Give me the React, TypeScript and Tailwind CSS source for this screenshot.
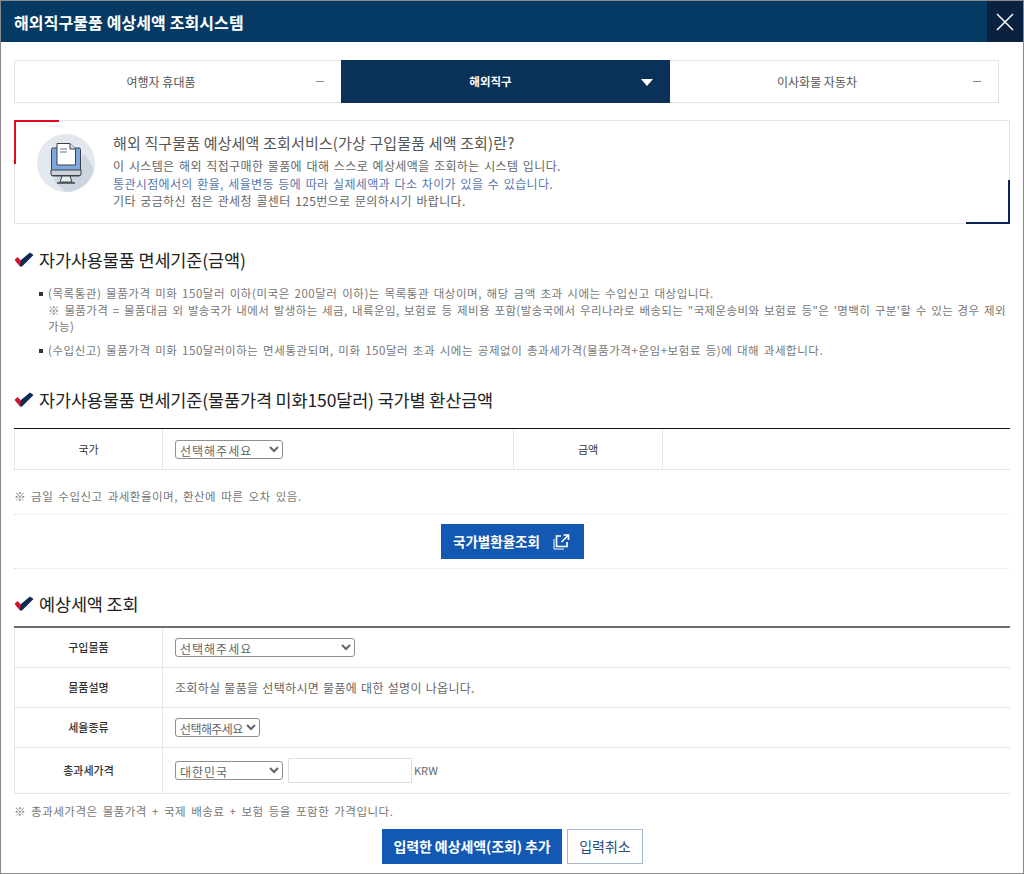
import { useState } from 'react';

const font = { fontFamily: '"Noto Sans CJK KR", "Noto Sans", sans-serif' };

function Title({ children, className }: { children: string; className: string }) {
  return (
    <h2 className={`flex items-center text-[#222] text-[17.5px] leading-[24px] tracking-[-0.15px] ${className}`}>
      <svg width="20" height="16" viewBox="0 0 20 16" className="mr-[5px] shrink-0">
        <path d="M0.5 8 L3.5 5 L7 8.5 L7 14 L6 14.5 Z" fill="#d3132f" />
        <path d="M6 14.500 L7 8 L16 0.500 L19.500 3 L8 14.500 Z" fill="#0c2a55" />
      </svg>
      {children}
    </h2>
  );
}

function Tab({ label, active, className = '' }: { label: string; active?: boolean; className?: string }) {
  if (active) {
    return (
      <div className="relative -my-px flex w-[329px] items-center justify-center bg-[#0a3158] pr-[30px] text-[11.500px] font-bold text-white">
        {label}
        <span className="absolute right-[17px] top-[19px] h-0 w-0 border-x-[6px] border-t-[7px] border-x-transparent border-t-white" />
      </div>
    );
  }
  return (
    <div className={`relative flex items-center justify-center pr-[34px] text-[12px] text-[#555] ${className}`}>
      {label}
      <span className="absolute right-[17px] top-[20px] h-px w-[8px] bg-[#888]" />
    </div>
  );
}

function Row({ label, h, children }: { label: string; h: string; children: React.ReactNode }) {
  return (
    <div className={`flex border-b border-[#e3e3e3] ${h}`}>
      <div className="flex w-[149px] shrink-0 items-center justify-center border-x border-[#e8e8e8] text-[11px] font-medium text-[#333]">
        {label}
      </div>
      <div className="flex flex-1 items-center gap-[5px] pl-[12px] text-[12px] text-[#666]">{children}</div>
    </div>
  );
}

function Sel({ className, options }: { className: string; options: string[] }) {
  return (
    <select className={`h-[19px] rounded-[3px] border border-[#8f8f8f] bg-white pl-0 text-[12px] leading-[15px] text-[#666] ${className}`} style={font}>
      {options.map((o) => (
        <option key={o}>{o}</option>
      ))}
    </select>
  );
}

export default function App() {
  const [amount, setAmount] = useState('');
  const pick = ['선택해주세요'];

  return (
    <div className="h-[874px] w-[1024px] overflow-hidden border-x border-y border-[#8a8a8a] bg-white" style={font}>
      {/* header */}
      <div className="flex h-[41px] items-center justify-between bg-[#043a63] pl-[13px]">
        <h1 className="text-[16px] font-bold tracking-[0.1px] text-white">해외직구물품 예상세액 조회시스템</h1>
        <button className="flex h-[41px] w-[36px] items-center justify-center bg-[#0a2240]">
          <svg width="20" height="20" viewBox="0 0 20 20" stroke="white" strokeWidth="1.500">
            <path d="M2 2 L18 18 M18 2 L2 18" />
          </svg>
        </button>
      </div>

      <div className="px-[13px]">
        {/* tabs */}
        <div className="mr-[11px] mt-[18px] flex h-[43px] border border-[#e3e3e3]">
          <Tab label="여행자 휴대품" className="w-[326px]" />
          <Tab label="해외직구" active />
          <Tab label="이사화물 자동차" className="flex-1" />
        </div>

        {/* info box */}
        <div className="relative mt-[17px] flex h-[104px] border border-[#dfe4ea]">
          <span className="absolute -left-px -top-px h-[2px] w-[45px] bg-[#e2071c]" />
          <span className="absolute -left-px -top-px h-[44px] w-[2px] bg-[#e2071c]" />
          <span className="absolute -bottom-px -right-px h-[2px] w-[44px] bg-[#0a2456]" />
          <span className="absolute -bottom-px -right-px h-[44px] w-[2px] bg-[#0a2456]" />
          <svg width="58" height="58" viewBox="0 0 58 58" className="ml-[22px] mt-[13px] shrink-0">
            <defs>
              <clipPath id="disc">
                <circle cx="29" cy="29" r="29" />
              </clipPath>
            </defs>
            <circle cx="29" cy="29" r="29" fill="#e3e8ee" />
            <path d="M48 20 L60 40 L60 60 L30 60 L16 46 Z" fill="#cdd6e0" clipPath="url(#disc)" />
            <rect x="14.500" y="14" width="29" height="28" rx="1.500" fill="#7fa6de" stroke="#39404a" strokeWidth="1" />
            <path d="M14 36 H44 V40 a1.500 1.500 0 0 1 -1.500 1.500 H15.500 a1.500 1.500 0 0 1 -1.500 -1.500 Z" fill="#cfd4da" stroke="#39404a" strokeWidth="1" />
            <path d="M25 42 L23 48 H35 L33 42 Z" fill="#e8ebee" stroke="#39404a" strokeWidth="1" />
            <path d="M20 49 H38" stroke="#39404a" strokeWidth="1.500" />
            <path d="M20 9.500 H33 L38.500 15 V31 H20 Z" fill="white" stroke="#39404a" strokeWidth="1" />
            <path d="M33 9.500 V15 H38.500" fill="#dde3ea" stroke="#39404a" strokeWidth="1" />
            <path d="M23 15 H30 M23 18 H30" stroke="#6b7480" strokeWidth="1" />
          </svg>
          <div className="ml-[18px] mt-[11px] text-[12px] leading-[17.500px] tracking-[0.35px] text-[#666] [word-spacing:1.500px]">
            <p className="mb-[3px] text-[15px] leading-[22px] tracking-[0.15px] text-[#555] [word-spacing:0px]">해외 직구물품 예상세액 조회서비스(가상 구입물품 세액 조회)란?</p>
            <p>이 시스템은 해외 직접구매한 물품에 대해 스스로 예상세액을 조회하는 시스템 입니다.</p>
            <p className="text-[#5a76ad]">통관시점에서의 환율, 세율변동 등에 따라 실제세액과 다소 차이가 있을 수 있습니다.</p>
            <p>기타 궁금하신 점은 관세청 콜센터 125번으로 문의하시기 바랍니다.</p>
          </div>
        </div>

        <Title className="mt-[24px]">자가사용물품 면세기준(금액)</Title>

        <ul className="mt-[13px] pl-[34px] text-[11.500px] leading-[16.500px] tracking-[0.55px] text-[#777] [word-spacing:1.500px]">
          <li className="relative">
            <span className="absolute -left-[9px] top-[7px] h-[4px] w-[4px] bg-[#333]" />
            (목록통관) 물품가격 미화 150달러 이하(미국은 200달러 이하)는 목록통관 대상이며, 해당 금액 초과 시에는 수입신고 대상입니다.
            <br />
            <span className="tracking-[0.4px]">
              ※ 물품가격 = 물품대금 외 발송국가 내에서 발생하는 세금, 내륙운임, 보험료 등 제비용 포함(발송국에서 우리나라로 배송되는 "국제운송비와 보험료 등"은 '명백히 구분'할 수 있는 경우 <span className="whitespace-nowrap">제외</span> 가능)
            </span>
          </li>
          <li className="relative mt-[7px]">
            <span className="absolute -left-[9px] top-[7px] h-[4px] w-[4px] bg-[#333]" />
            (수입신고) 물품가격 미화 150달러이하는 면세통관되며, 미화 150달러 초과 시에는 공제없이 총과세가격(물품가격+운임+보험료 등)에 대해 과세합니다.
          </li>
        </ul>

        <Title className="mt-[30px]">자가사용물품 면세기준(물품가격 미화150달러) 국가별 환산금액</Title>

        {/* exchange table */}
        <div className="mt-[16px] border-t border-[#111]">
          <div className="flex h-[41px] border-b border-[#e3e3e3]">
            <div className="flex w-[149px] items-center justify-center border-x border-[#e8e8e8] text-[11px] text-[#333]">국가</div>
            <div className="flex w-[350px] items-center pl-[12px]">
              <Sel className="w-[108px] tracking-[1px]" options={pick} />
            </div>
            <div className="flex w-[150px] items-center justify-center border-x border-[#e8e8e8] text-[11px] text-[#333]">금액</div>
          </div>
        </div>

        <p className="mt-[18px] text-[11.500px] leading-[16px] tracking-[0.5px] text-[#777] [word-spacing:2px]">※ 금일 수입신고 과세환율이며, 환산에 따른 오차 있음.</p>

        <div className="mt-[10px] flex h-[55px] items-center justify-center border-y border-dotted border-[#e2e2e2]">
          <button className="flex h-[35px] w-[143px] items-center justify-center gap-[13px] bg-[#1359b3] text-[13.500px] font-bold text-white">
            국가별환율조회
            <svg width="18" height="18" viewBox="0 0 18 18" fill="none" stroke="white" strokeWidth="1.700">
              <path d="M8 3 H3.500 V13.500 H14 V9" />
              <path d="M10.500 2 H15.500 V7 M15.500 2 L8.500 9" />
              <path d="M1 6 V16 H11" strokeWidth="1" />
            </svg>
          </button>
        </div>

        <Title className="mt-[23px]">예상세액 조회</Title>

        {/* estimate table */}
        <div className="mt-[10px] border-t-2 border-[#6e6e6e]">
          <Row label="구입물품" h="h-[40px]">
            <Sel className="w-[180px] tracking-[1px]" options={pick} />
          </Row>
          <Row label="물품설명" h="h-[40px]">
            <span className="tracking-[0.3px] [word-spacing:1px]">조회하실 물품을 선택하시면 물품에 대한 설명이 나옵니다.</span>
          </Row>
          <Row label="세율종류" h="h-[40px]">
            <Sel className="w-[85px] tracking-[-0.6px]" options={pick} />
          </Row>
          <Row label="총과세가격" h="h-[46px]">
            <Sel className="w-[108px] tracking-[1px]" options={['대한민국']} />
            <input
              value={amount}
              onChange={(e) => setAmount(e.target.value)}
              className="h-[25px] w-[124px] border border-[#e0e0e0] bg-white"
            />
            <span className="-ml-[3px] text-[11px]">KRW</span>
          </Row>
        </div>

        <p className="mt-[9px] text-[11.500px] leading-[16px] tracking-[0.5px] text-[#777] [word-spacing:2px]">※ 총과세가격은 물품가격 + 국제 배송료 + 보험 등을 포함한 가격입니다.</p>

        <div className="mt-[10px] flex justify-center gap-[5px] pl-[1px]">
          <button className="h-[35px] w-[180px] bg-[#1359b3] text-[14px] font-bold tracking-[-0.1px] text-white">입력한 예상세액(조회) 추가</button>
          <button className="h-[35px] w-[76px] border border-[#a9b7d6] bg-white text-[14px] text-[#2a4a80]">입력취소</button>
        </div>
      </div>
    </div>
  );
}
